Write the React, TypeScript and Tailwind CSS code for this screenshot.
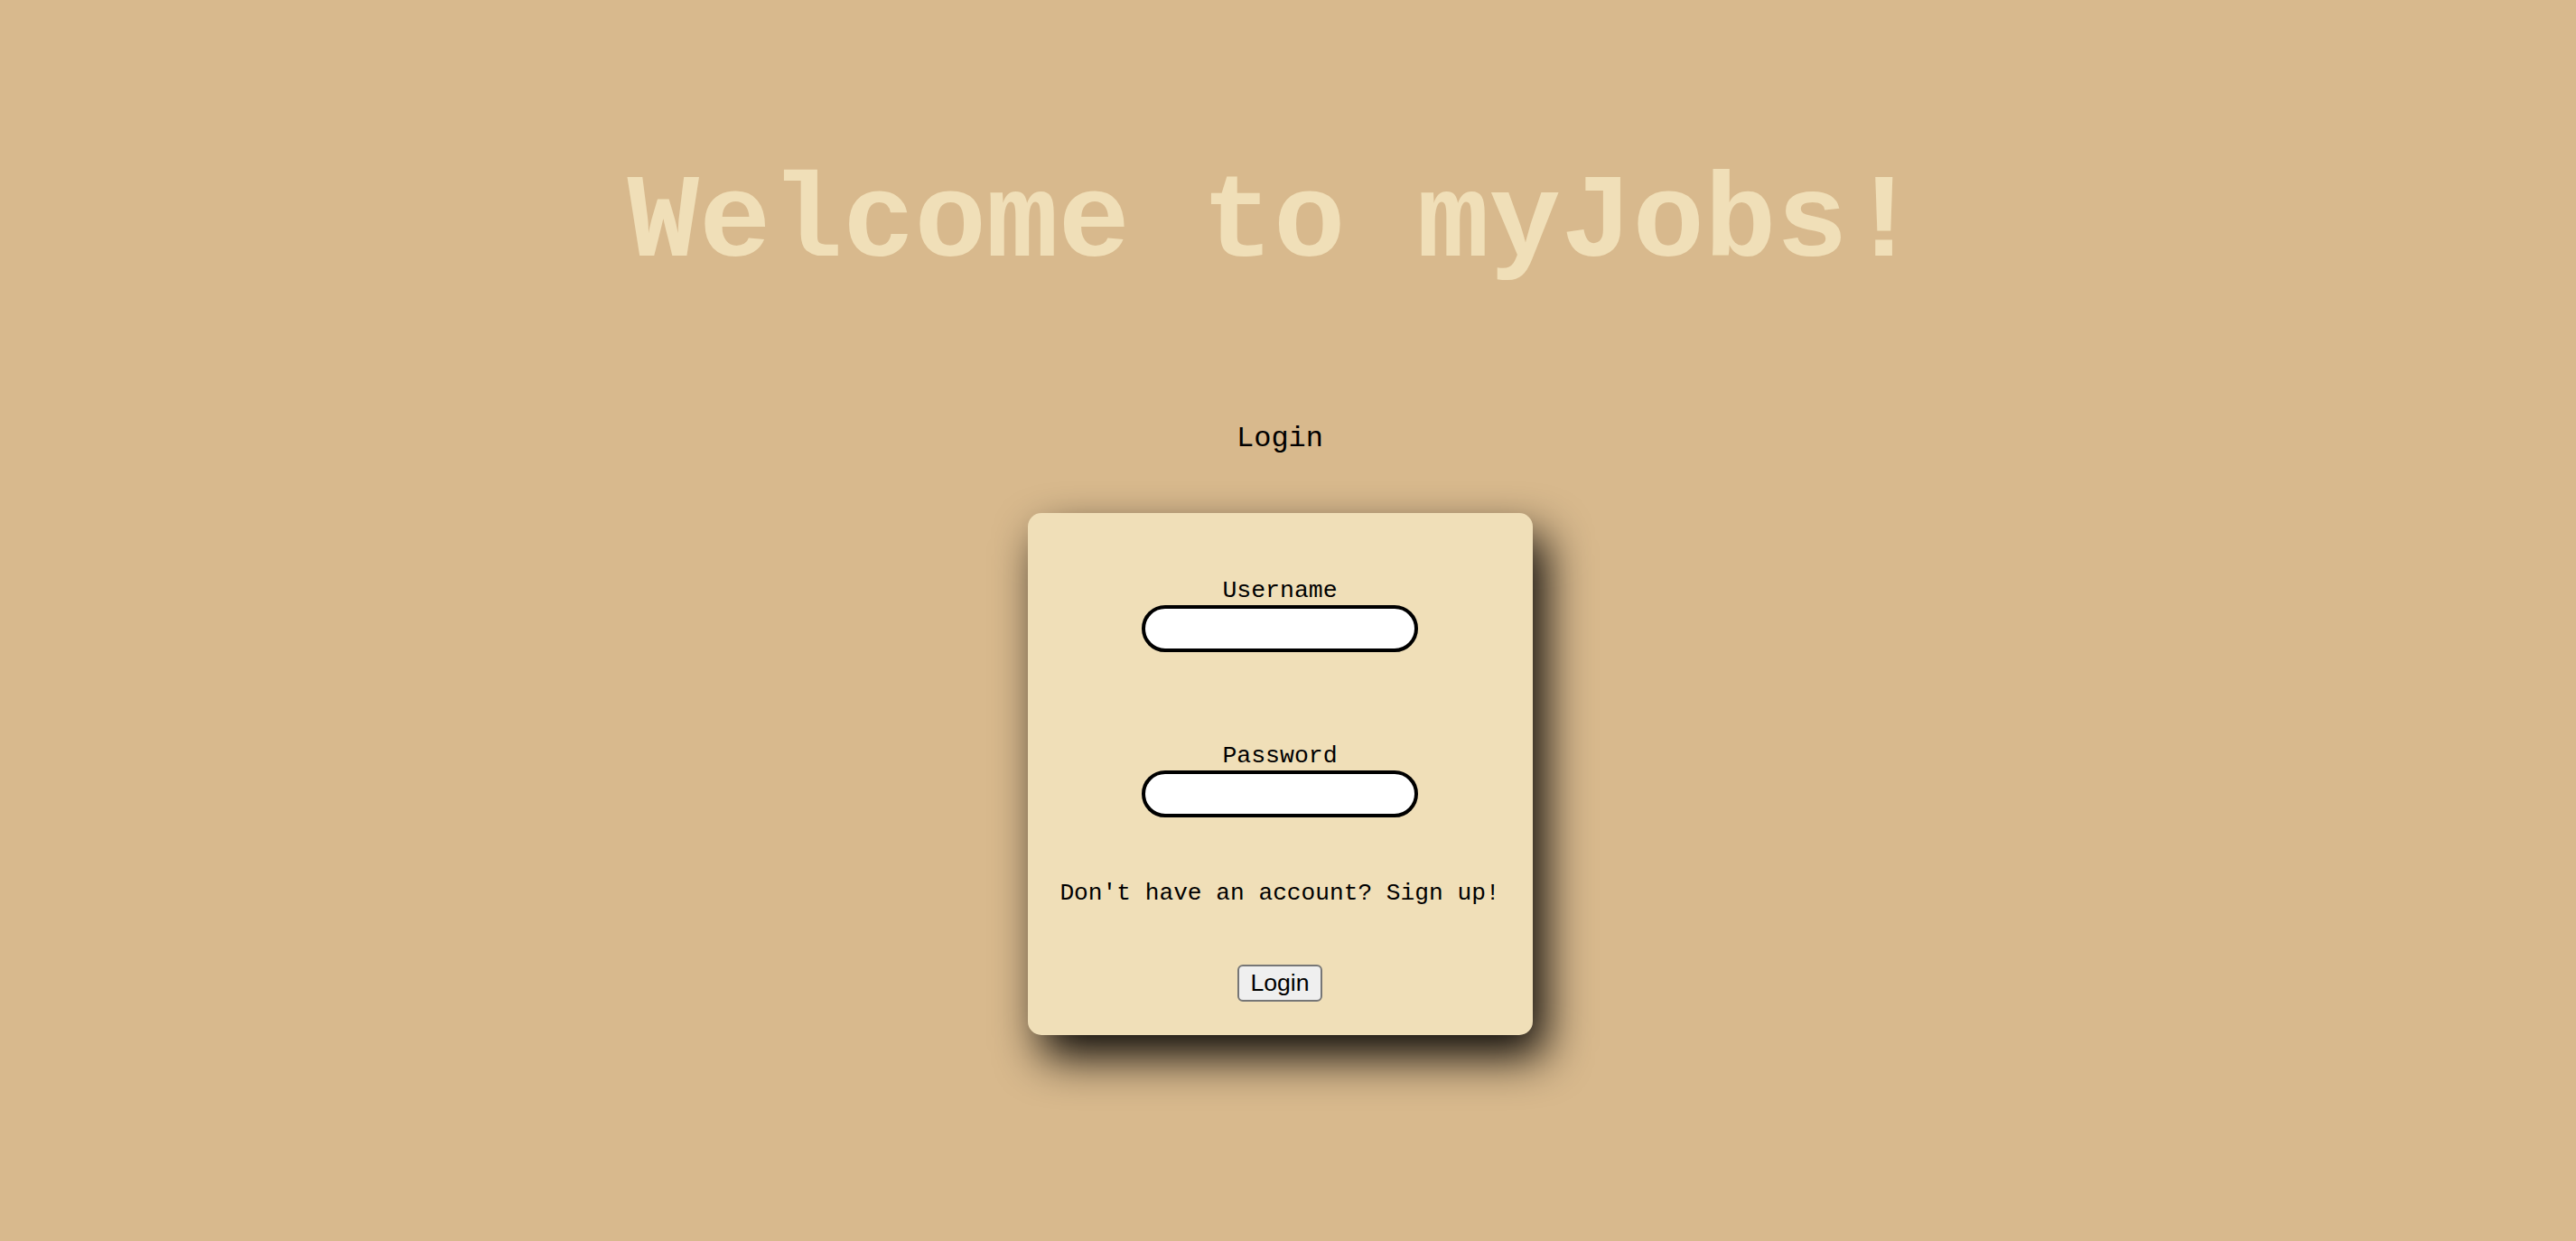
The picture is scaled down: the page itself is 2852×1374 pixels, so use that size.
import React from 'react';

const mono = "font-['Liberation_Mono','Courier_New',monospace]";

const Field: React.FC<{ label: string; type?: string; className?: string }> = ({ label, type = 'text', className = '' }) => (
  <div className={`flex flex-col items-center ${className}`}>
    <label className={`${mono} text-[26.5px] leading-[27px] text-black`}>{label}</label>
    <input
      type={type}
      className="mt-[2px] h-[52px] w-[306px] rounded-full border-4 border-black bg-white px-4 outline-none"
    />
  </div>
);

export default function App() {
  return (
    <div className="min-h-screen w-full bg-[#d8b98d]">
      <div className="flex w-[2834px] flex-col items-center">
        <h1 className={`${mono} mt-[182px] mr-[14px] text-[132.5px] font-bold leading-[133px] text-[#f0dfb8]`}>
          Welcome to myJobs!
        </h1>

        <h2 className={`${mono} mt-[155px] text-[32px] leading-[32px] text-black`}>Login</h2>

        <div className="mt-[66px] flex w-[559px] flex-col items-center rounded-[15px] bg-[#f0dfb8] pt-[73px] pb-[37px] shadow-[14px_24px_50px_rgba(0,0,0,0.95)]">
          <Field label="Username" />
          <Field label="Password" type="password" className="mt-[102px]" />

          <p className={`${mono} mt-[71px] text-[26.2px] leading-[27px] text-black`}>
            Don't have an account? Sign up!
          </p>

          <button className="mt-[65px] h-[41px] rounded-[6px] border-2 border-[#767676] bg-[#efefef] px-[12px] font-['Liberation_Sans',Arial,sans-serif] text-[26.67px] leading-none text-black">
            Login
          </button>
        </div>
      </div>
    </div>
  );
}
